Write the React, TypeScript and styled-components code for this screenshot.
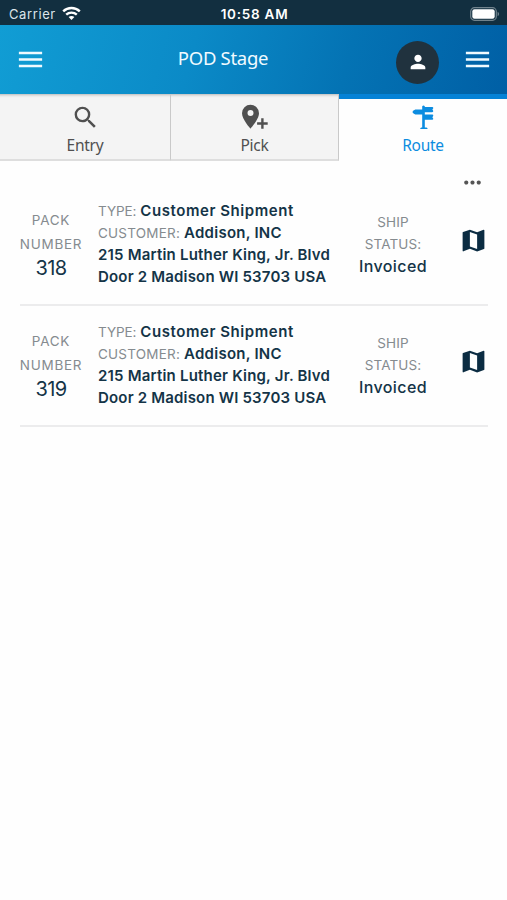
import React from 'react';
import styled, { createGlobalStyle } from 'styled-components';
import { MdMap, MdMenu, MdMoreHoriz, MdPerson, MdSearch } from 'react-icons/md';

const GlobalStyle = createGlobalStyle`
  *, *::before, *::after { box-sizing: border-box; }
  body { margin: 0; background: #fff; font-family: Inter, 'Liberation Sans', sans-serif; }
`;

const Screen = styled.div`
  width: 507px;
  height: 900px;
  background: #fefefe;
  overflow: hidden;
`;

const StatusBar = styled.div`
  display: grid;
  grid-template-columns: 1fr auto 1fr;
  align-items: center;
  height: 25px;
  padding: 2px 7px 0 9px;
  background: #122f40;
  color: #fff;
  font-size: 13px;
`;

const Carrier = styled.div`
  display: flex;
  align-items: center;
  gap: 6px;
  color: #dce5ea;
  letter-spacing: 0.6px;
`;

const Clock = styled.div`
  font-size: 13.5px;
  font-weight: 600;
  letter-spacing: 0.75px;
`;

const BatterySlot = styled.div`
  display: flex;
  justify-content: flex-end;
`;

const Header = styled.header`
  display: grid;
  grid-template-columns: 162px 122px 1fr;
  height: 69px;
  background: linear-gradient(105deg, #119dd4 0%, #0b8ac7 38%, #0473b4 68%, #005fa5 100%);
  color: #f0faff;
  align-items: center;
`;

const HeaderSide = styled.div<{ $end?: boolean }>`
  display: flex;
  align-items: center;
  justify-content: ${(p) => (p.$end ? 'flex-end' : 'flex-start')};
  gap: 23px;
  padding: ${(p) => (p.$end ? '0 14px 0 0' : '0 0 0 15px')};
`;

const Title = styled.h1`
  margin: 0 0 3px;
  text-align: center;
  white-space: nowrap;
  font: 400 18.5px/28px 'Noto Sans', sans-serif;
  letter-spacing: -0.3px;
`;

const Avatar = styled.div`
  display: grid;
  place-items: center;
  width: 43px;
  height: 43px;
  margin-top: 5px;
  border-radius: 50%;
  background: #20323e;
  color: #fff;
`;

const Tabs = styled.nav`
  display: grid;
  grid-template-columns: 171px 168px 168px;
  height: 67px;
`;

const Tab = styled.div<{ $active?: boolean }>`
  display: flex;
  flex-direction: column;
  align-items: center;
  padding-top: ${(p) => (p.$active ? '4px' : '9px')};
  background: ${(p) => (p.$active ? '#fefefe' : '#f4f4f4')};
  color: ${(p) => (p.$active ? '#0c8ce0' : '#505050')};
  border-top: ${(p) => (p.$active ? '5px solid #0582d6' : '0')};
  border-right: ${(p) => (p.$active ? '0' : '1px solid #c9c9c9')};
  border-bottom: ${(p) => (p.$active ? '0' : '2px solid #dedede')};
  box-shadow: ${(p) => (p.$active ? 'none' : 'inset 0 4px 3px -3px #b5b5b5')};
`;

const TabIcon = styled.div`
  display: grid;
  place-items: center;
  height: 28px;
`;

const TabLabel = styled.span`
  font: 400 15.5px/24px 'Noto Sans', sans-serif;
  margin-top: 2px;
  letter-spacing: -0.25px;
`;

const Toolbar = styled.div`
  display: flex;
  justify-content: flex-end;
  height: 24px;
  padding: 9px 22px 0 0;
  color: #555;
`;

const List = styled.main`
  margin: 0 19px 0 20px;
`;

const Row = styled.article`
  display: grid;
  grid-template-columns: 62px 237px 84px 1fr;
  column-gap: 16px;
  height: 121px;
  padding-top: 15px;
  border-bottom: 2px solid #ececed;
  color: #143447;
  white-space: nowrap;
`;

const Pack = styled.div`
  display: flex;
  flex-direction: column;
  align-items: center;
  padding-top: 8px;
`;

const PackLabel = styled.span`
  font-size: 13.5px;
  line-height: 24px;
  color: #858b8f;
  letter-spacing: 0.75px;
`;

const PackNumber = styled.span`
  font-size: 20px;
  line-height: 25px;
  font-weight: 400;
  letter-spacing: -0.7px;
`;

const Line = styled.div`
  font-size: 15px;
  line-height: 22px;
  font-weight: 600;
`;

const Caption = styled.span<{ $track: number }>`
  margin-right: 4px;
  color: #858b8f;
  font-size: 13.5px;
  font-weight: 400;
  letter-spacing: ${(p) => p.$track}px;
`;

const Value = styled.span<{ $track: number }>`
  letter-spacing: ${(p) => p.$track}px;
`;

const Ship = styled.div`
  display: flex;
  flex-direction: column;
  align-items: center;
  padding-top: 11px;
`;

const ShipLabel = styled.span`
  font-size: 13.5px;
  line-height: 22px;
  color: #858b8f;
  letter-spacing: 0.1px;
`;

const ShipValue = styled.span`
  font-size: 16px;
  line-height: 22px;
  font-weight: 500;
  letter-spacing: 0.4px;
`;

const MapButton = styled.div`
  display: flex;
  justify-content: flex-end;
  padding: 26px 0 0;
  color: #0b2c42;
`;

const Wifi = () => (
  <svg width="19" height="15" viewBox="0 0 19 15" fill="none" stroke="#fff" strokeWidth="2.4">
    <path d="M1.2 5.4C5.9.9 13.1.9 17.8 5.4" />
    <path d="M4.2 8.7c3-2.8 7.6-2.8 10.6 0" />
    <path d="M9.5 14l-2.9-2.9c1.7-1.4 4.1-1.4 5.8 0z" fill="#fff" stroke="none" />
  </svg>
);

const Battery = () => (
  <svg width="30" height="14" viewBox="0 0 30 14">
    <rect x=".7" y=".7" width="25.6" height="12.6" rx="3.8" fill="none" stroke="#71838d" strokeWidth="1.2" />
    <rect x="2.3" y="2.3" width="22.4" height="9.4" rx="2.2" fill="#fff" />
    <path d="M27.6 4.8c2 .8 2 3.6 0 4.4z" fill="#71838d" />
  </svg>
);

const PinPlus = () => (
  <svg width="27" height="26" viewBox="0 0 27 26" fill="currentColor">
    <path
      fillRule="evenodd"
      d="M9.5.8A8.5 8.5 0 0 0 1 9.3c0 6.1 8.5 15.4 8.5 15.4S18 15.4 18 9.3A8.5 8.5 0 0 0 9.5.8zm0 5.3a3 3 0 1 1 0 6 3 3 0 0 1 0-6z"
    />
    <path d="M20.2 14.2h2.4v4.1h4.1v2.4h-4.1v4.1h-2.4v-4.1h-4.1v-2.4h4.1z" />
  </svg>
);

const Signpost = () => (
  <svg width="22" height="25" viewBox="0 0 22 25" fill="currentColor">
    <path d="M10.2 1.2Q11.5-.4 12.8 1.2V22.4h1.6q1.2 0 1.2 1.5H8.2q0-1.5 1.2-1.5h.8z" />
    <path d="M11 2.1h9.2q1.2 0 1.1 1.1l-.9 1.4.9 1.5q0 1.1-1.1 1.1H11z" />
    <path d="M12 4.6H3.3Q1.3 5.4.3 7q1 1.6 3 2.4H12z" />
    <path d="M11 9.6h9.2q1.2 0 1.1 1.1l-.9 1.5.9 1.5q0 1.1-1.1 1.1H11z" />
  </svg>
);

const packs = ['318', '319'];

export default function App() {
  return (
    <>
      <GlobalStyle />
      <Screen>
        <StatusBar>
          <Carrier>Carrier<Wifi /></Carrier>
          <Clock>10:58 AM</Clock>
          <BatterySlot><Battery /></BatterySlot>
        </StatusBar>
        <Header>
          <HeaderSide><MdMenu size={31} /></HeaderSide>
          <Title>POD Stage</Title>
          <HeaderSide $end>
            <Avatar><MdPerson size={22} /></Avatar>
            <MdMenu size={31} />
          </HeaderSide>
        </Header>
        <Tabs>
          <Tab><TabIcon><MdSearch size={29} /></TabIcon><TabLabel>Entry</TabLabel></Tab>
          <Tab><TabIcon><PinPlus /></TabIcon><TabLabel>Pick</TabLabel></Tab>
          <Tab $active><TabIcon><Signpost /></TabIcon><TabLabel>Route</TabLabel></Tab>
        </Tabs>
        <Toolbar><MdMoreHoriz size={25} /></Toolbar>
        <List>
          {packs.map((pack) => (
            <Row key={pack}>
              <Pack>
                <PackLabel>PACK</PackLabel>
                <PackLabel>NUMBER</PackLabel>
                <PackNumber>{pack}</PackNumber>
              </Pack>
              <div>
                <Line><Caption $track={-0.1}>TYPE:</Caption><Value $track={0.57}>Customer Shipment</Value></Line>
                <Line><Caption $track={0.22}>CUSTOMER:</Caption><Value $track={0.25}>Addison, INC</Value></Line>
                <Line><Value $track={0.2}>215 Martin Luther King, Jr. Blvd</Value></Line>
                <Line><Value $track={0.18}>Door 2 Madison WI 53703 USA</Value></Line>
              </div>
              <Ship>
                <ShipLabel>SHIP</ShipLabel>
                <ShipLabel>STATUS:</ShipLabel>
                <ShipValue>Invoiced</ShipValue>
              </Ship>
              <MapButton><MdMap size={29} /></MapButton>
            </Row>
          ))}
        </List>
      </Screen>
    </>
  );
}
